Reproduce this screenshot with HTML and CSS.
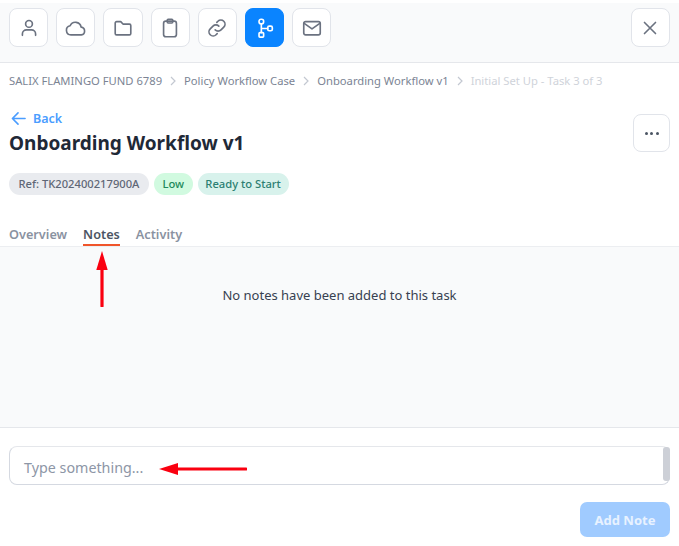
FILE: index.html
```html
<!DOCTYPE html>
<html lang="en">
<head>
<meta charset="utf-8">
<title>Onboarding Workflow v1</title>
<link rel="stylesheet" href="styles.css">
</head>
<body>
<div class="page">
  <header class="toolbar">
    <div class="tool-group">
      <button class="tool"><svg viewBox="0 0 24 24"><circle cx="12" cy="7.500" r="3.700"/><path d="M4.800 20v-1.500a4.500 4.500 0 0 1 4.500-4.500h5.400a4.500 4.500 0 0 1 4.500 4.500V20"/></svg></button>
      <button class="tool"><svg viewBox="0 0 24 24"><path d="M6.500 19.500a5 5 0 0 1-.9-9.900 6.300 6.300 0 0 1 12 1.400 4.300 4.300 0 0 1 .2 8.500z"/></svg></button>
      <button class="tool"><svg viewBox="0 0 24 24"><path d="M3.500 6.500a1.500 1.500 0 0 1 1.500-1.500h4.500l2.500 2.700h7a1.500 1.500 0 0 1 1.500 1.500v8.800a1.500 1.500 0 0 1-1.500 1.500H5a1.500 1.500 0 0 1-1.500-1.500z"/></svg></button>
      <button class="tool"><svg viewBox="0 0 24 24"><rect x="5" y="4.500" width="14" height="17" rx="2.500"/><rect x="9" y="2.500" width="6" height="4" rx="1"/></svg></button>
      <button class="tool"><svg viewBox="0 0 24 24"><path d="M10 14a4.500 4.500 0 0 0 6.400 0l3-3a4.500 4.500 0 0 0-6.400-6.400l-1.200 1.200"/><path d="M14 10a4.500 4.500 0 0 0-6.400 0l-3 3a4.500 4.500 0 0 0 6.400 6.400l1.200-1.200"/></svg></button>
      <button class="tool tool-active"><svg viewBox="0 0 24 24"><rect x="5.500" y="2.500" width="5" height="5" rx="2.200"/><rect x="5.500" y="17" width="5" height="5" rx="1"/><rect x="15" y="10" width="5" height="5" rx="1.600"/><path d="M8 7.500V17M8 12.500h7"/></svg></button>
      <button class="tool"><svg viewBox="0 0 24 24"><rect x="3" y="5" width="18" height="14.500" rx="2"/><path d="M3.500 7l8.500 6 8.500-6"/></svg></button>
    </div>
    <button class="tool"><svg viewBox="0 0 24 24"><path d="M6 6l12 12M18 6L6 18"/></svg></button>
  </header>

  <nav class="crumbs">
    <span>SALIX FLAMINGO FUND 6789</span>
    <svg class="chev" viewBox="0 0 8 12"><path d="M2 2l4 4-4 4"/></svg>
    <span>Policy Workflow Case</span>
    <svg class="chev" viewBox="0 0 8 12"><path d="M2 2l4 4-4 4"/></svg>
    <span>Onboarding Workflow v1</span>
    <svg class="chev" viewBox="0 0 8 12"><path d="M2 2l4 4-4 4"/></svg>
    <span class="crumb-current">Initial Set Up - Task 3 of 3</span>
  </nav>

  <section class="heading">
    <div>
      <a class="back"><svg viewBox="0 0 16 16"><path d="M15 8H1.500M7.500 2L1.500 8l6 6"/></svg>Back</a>
      <h1>Onboarding Workflow v1</h1>
    </div>
    <button class="more"><i></i><i></i><i></i></button>
  </section>

  <div class="chips">
    <span class="chip chip-ref">Ref: TK202400217900A</span>
    <span class="chip chip-low">Low</span>
    <span class="chip chip-ready">Ready to Start</span>
  </div>

  <div class="tabs">
    <span class="tab">Overview</span>
    <span class="tab tab-active">Notes</span>
    <span class="tab">Activity</span>
  </div>

  <main class="notes">
    <p>No notes have been added to this task</p>
    <svg class="arrow-up" viewBox="0 0 14 56"><path d="M7 55V12"/><polygon points="7,0 12.700,19 1.300,19"/></svg>
  </main>

  <footer class="composer">
    <div class="input">
      <span class="placeholder">Type something...</span>
      <svg class="arrow-left" viewBox="0 0 88 14"><path d="M87 7H14"/><polygon points="0,7 19,1 19,13"/></svg>
      <span class="scrollbar"></span>
    </div>
    <div class="actions"><button class="add">Add Note</button></div>
  </footer>
</div>
</body>
</html>
```
FILE: styles.css
```css
* { box-sizing: border-box; }
html, body { margin: 0; padding: 0; background: #fff; }
body { font-family: "Noto Sans", "Open Sans", sans-serif; color: #1f2937; }
button { font-family: inherit; padding: 0; cursor: pointer; }
.page { width: 679px; height: 546px; padding-top: 3px; overflow: hidden; display: flex; flex-direction: column; }

.toolbar { height: 60px; padding: 5px 9px 0; background: #f9fafb; border-bottom: 1px solid #e5e7eb; display: flex; justify-content: space-between; align-items: flex-start; }
.tool-group { display: flex; gap: 8px; }
.tool { width: 39.200px; height: 39px; background: #fff; border: 1px solid #e1e4ea; border-radius: 8px; display: flex; align-items: center; justify-content: center; }
.tool svg { width: 22px; height: 22px; fill: none; stroke: #6b7280; stroke-width: 1.800; stroke-linecap: round; stroke-linejoin: round; }
.tool-active { background: #0a84ff; border-color: #0a84ff; }
.tool-active svg { stroke: #fff; }

.crumbs { height: 38px; padding: 0 9px 3px; display: flex; align-items: center; font-size: 11.230px; color: #7b8494; }
.crumbs span { white-space: nowrap; }
.chev { width: 8px; height: 12px; margin: 0 7px; fill: none; stroke: #c3c8d1; stroke-width: 1.200; }
.crumb-current { color: #cfd3da; }

.heading { padding: 0 9px; height: 52px; margin-top: 9px; display: flex; justify-content: space-between; align-items: flex-start; }
.back { display: flex; align-items: center; gap: 7px; height: 16px; font-size: 12.500px; font-weight: 600; color: #4a9dff; margin-left: 2px; }
.back svg { width: 15px; height: 15px; fill: none; stroke: #4a9dff; stroke-width: 1.700; stroke-linecap: round; stroke-linejoin: round; }
h1 { margin: 4px 0 0; font-size: 19px; line-height: 26px; font-weight: 700; color: #1f2937; }
.more { width: 37px; height: 38px; margin-top: 4px; background: #fff; border: 1px solid #e1e4ea; border-radius: 8px; display: flex; align-items: center; justify-content: center; gap: 2.500px; }
.more i { width: 3px; height: 3px; border-radius: 50%; background: #4b5563; }

.chips { padding: 0 9px; height: 22px; margin-top: 11px; display: flex; gap: 5px; }
.chip { height: 22px; padding: 0 7.800px; border-radius: 11px; font-size: 11.200px; line-height: 22px; font-weight: 500; white-space: nowrap; }
.chip-ref { background: #e9ebef; color: #5f6776; padding: 0 9.500px; }
.chip-low { background: #d1fae0; color: #1f8a5b; padding: 0 8.500px; }
.chip-ready { background: #d8f2ec; color: #2c7f72; }

.tabs { height: 32px; margin-top: 20px; padding: 0 9px; display: flex; gap: 16px; border-bottom: 1px solid #eceef1; }
.tab { height: 31px; padding-top: 10px; font-size: 12.700px; line-height: 18px; font-weight: 600; color: #8a92a1; }
.tab-active { color: #4b5563; border-bottom: 2px solid #f0552b; }

.notes { position: relative; height: 181px; background: #f9fafb; border-bottom: 1px solid #e5e7eb; display: flex; justify-content: center; }
.notes p { margin: 38px 0 0; font-size: 13px; line-height: 20px; color: #374151; }
.arrow-up { position: absolute; left: 95px; top: 4px; width: 14px; height: 56px; }
.arrow-up path { stroke: #fa0010; stroke-width: 3.200; stroke-linecap: round; fill: none; }
.arrow-up polygon { fill: #fa0010; }

.composer { padding: 18px 9px 0; }
.input { position: relative; height: 39px; padding: 3px 0 0 14px; background: #fff; border: 1px solid #d5d9e1; border-top-color: #e5e7eb; border-radius: 8px; display: flex; align-items: center; }
.placeholder { font-size: 14.300px; color: #8d96a6; }
.arrow-left { position: absolute; left: 149px; top: 15px; width: 88px; height: 14px; }
.arrow-left path { stroke: #fa0010; stroke-width: 3.200; stroke-linecap: round; fill: none; }
.arrow-left polygon { fill: #fa0010; }
.scrollbar { position: absolute; right: -1px; top: 0; width: 7px; height: 34px; border-radius: 3px; background: #cdd0d7; }
.actions { display: flex; justify-content: flex-end; margin-top: 17px; }
.add { width: 90px; height: 35px; border: 0; border-radius: 7px; background: #a0cbff; color: #e8f2ff; font-size: 13px; font-weight: 700; }
```
